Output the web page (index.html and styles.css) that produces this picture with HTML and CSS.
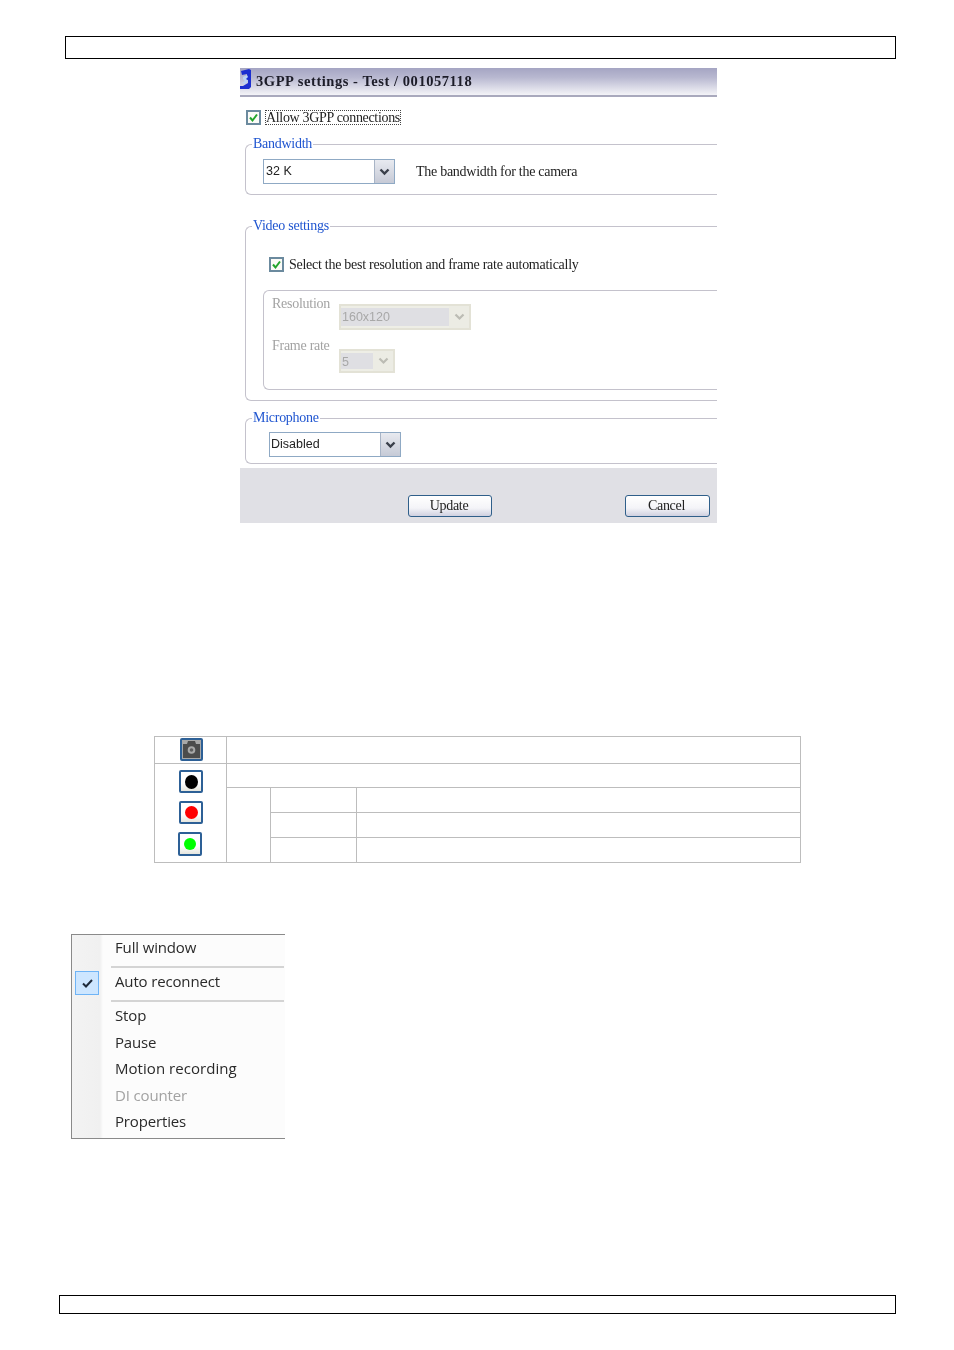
FILE: index.html
```html
<!DOCTYPE html>
<html lang="en">
<head>
<meta charset="utf-8">
<title>3GPP settings</title>
<link rel="stylesheet" href="styles.css">
</head>
<body>
<div class="page">
  <div class="head-box"></div>

  <section class="dialog">
    <div class="titlebar">
      <svg class="app-icon" width="11" height="21" viewBox="0 0 11 21"><path d="M1 2 L9 0 L11 1 V18 L9 20 H0 V17 H3 L8 14 V11 L4 10 L7 8 V5 L2 6 Z" fill="#1c2fd0"/><path d="M3 8 L7 6 L8 8 L6 10 L8 12 L5 15 L2 14 L5 12 L3 10 Z" fill="#bcd4f5"/></svg>
      <span class="title">3GPP settings - Test / 001057118</span>
    </div>

    <div class="allow-row">
      <span class="check"><svg width="11" height="11" viewBox="0 0 11 11"><path d="M2 5.5 L4.5 8.5 L9 2.5" fill="none" stroke="#22a52c" stroke-width="2"/></svg></span>
      <span class="allow-label">Allow 3GPP connections</span>
    </div>

    <fieldset class="group bandwidth">
      <legend>Bandwidth</legend>
      <div class="band-row">
        <div class="combo w132"><span class="combo-text">32 K</span><span class="combo-btn"><svg width="11" height="8" viewBox="0 0 11 8"><path d="M1.5 1.5 L5.5 5.5 L9.5 1.5" fill="none" stroke="#3a3f4a" stroke-width="2.4"/></svg></span></div>
        <span class="serif-text band-note">The bandwidth for the camera</span>
      </div>
    </fieldset>

    <fieldset class="group video">
      <legend>Video settings</legend>
      <div class="auto-row">
        <span class="check"><svg width="11" height="11" viewBox="0 0 11 11"><path d="M2 5.5 L4.5 8.5 L9 2.5" fill="none" stroke="#22a52c" stroke-width="2"/></svg></span>
        <span class="serif-text auto-label">Select the best resolution and frame rate automatically</span>
      </div>
      <div class="inner">
        <div class="inner-row res-row">
          <span class="serif-text muted lbl">Resolution</span>
          <div class="combo off w132h26"><span class="combo-text">160x120</span><span class="combo-btn"><svg width="11" height="8" viewBox="0 0 11 8"><path d="M1.5 1.5 L5.5 5.5 L9.5 1.5" fill="none" stroke="#bcbcb4" stroke-width="2.2"/></svg></span></div>
        </div>
        <div class="inner-row rate-row">
          <span class="serif-text muted lbl">Frame rate</span>
          <div class="combo off w56"><span class="combo-text">5</span><span class="combo-btn"><svg width="11" height="8" viewBox="0 0 11 8"><path d="M1.5 1.5 L5.5 5.5 L9.5 1.5" fill="none" stroke="#bcbcb4" stroke-width="2.2"/></svg></span></div>
        </div>
      </div>
    </fieldset>

    <fieldset class="group mic">
      <legend>Microphone</legend>
      <div class="combo w132 mic-combo"><span class="combo-text">Disabled</span><span class="combo-btn"><svg width="11" height="8" viewBox="0 0 11 8"><path d="M1.5 1.5 L5.5 5.5 L9.5 1.5" fill="none" stroke="#3a3f4a" stroke-width="2.4"/></svg></span></div>
    </fieldset>

    <div class="actions">
      <span class="btn btn-update">Update</span>
      <span class="btn">Cancel</span>
    </div>
  </section>

  <table class="legend-table">
    <colgroup><col class="c1"><col class="c2"><col class="c3"><col class="c4"></colgroup>
    <tr class="r27">
      <td class="icon-cell top-icon">
        <span class="tool cam"><svg width="19" height="19" viewBox="0 0 19 19"><path d="M1 4 H5 L6 1 H13 L14 4 H18 V18 H1 Z" fill="#4c4c4c"/><circle cx="9.5" cy="10" r="3.8" fill="#a8a8a8"/><circle cx="9.5" cy="10" r="1.8" fill="#5e5e5e"/></svg></span>
      </td>
      <td colspan="3"></td>
    </tr>
    <tr class="r24">
      <td rowspan="4" class="icon-cell stack">
        <div class="tools">
          <span class="tool"><span class="dot black"></span></span>
          <span class="tool"><span class="dot red"></span></span>
          <span class="tool shift"><span class="dot green"></span></span>
        </div>
      </td>
      <td colspan="3"></td>
    </tr>
    <tr class="r25"><td rowspan="3"></td><td></td><td></td></tr>
    <tr class="r25"><td></td><td></td></tr>
    <tr class="r25"><td></td><td></td></tr>
  </table>

  <nav class="menu">
    <div class="menu-item first">Full window</div>
    <div class="menu-sep"></div>
    <div class="menu-item auto"><span class="tick"><svg width="11" height="9" viewBox="0 0 11 9"><path d="M1 4.5 L4 7.5 L10 1" fill="none" stroke="#1f2a3a" stroke-width="2"/></svg></span>Auto reconnect</div>
    <div class="menu-sep"></div>
    <div class="menu-item">Stop</div>
    <div class="menu-item">Pause</div>
    <div class="menu-item motion">Motion recording</div>
    <div class="menu-item dim">DI counter</div>
    <div class="menu-item">Properties</div>
  </nav>

  <div class="foot-box"></div>
</div>
</body>
</html>
```
FILE: styles.css
```css
* { box-sizing: border-box; }
html, body { margin: 0; padding: 0; background: #fff; }
.page { width: 954px; height: 1350px; padding-top: 36px; overflow: hidden; }

.head-box { width: 831px; height: 23px; margin-left: 65px; border: 1px solid #000; }
.foot-box { width: 837px; height: 19px; margin: 156px 0 0 59px; border: 1px solid #000; }

.dialog { width: 477px; margin: 9px 0 0 240px; overflow: hidden; filter: blur(.35px); }

.titlebar { height: 29px; display: flex; align-items: center; border-bottom: 2px solid #a9a9bd;
  background: linear-gradient(#a5a5c3 0, #b8b8d0 35%, #f4f4f8 100%); }
.app-icon { flex: none; margin-bottom: 4px; }
.title { margin-left: 5px; font: bold 14.5px "Liberation Serif", serif; color: #1c1c28; letter-spacing: .55px; }

.check { flex: none; width: 15px; height: 15px; border: 2px solid #6b8a9e; background: #fbfbf7; display: flex; align-items: center; justify-content: center; }
.allow-row { display: flex; align-items: center; height: 15px; margin: 13px 0 0 6px; }
.allow-label { margin-left: 4px; padding: 0 1px; outline: 1px dotted #444; outline-offset: -1px; font: 14px/15px "Liberation Serif", serif; color: #222; letter-spacing: -.32px; white-space: nowrap; }

.group { margin: 0 0 0 5px; padding: 0; border: 1px solid #c4c2cc; border-right: 0; border-radius: 6px 0 0 6px; min-width: 0; }
.group legend { margin-left: 6px; padding: 0 1px; font: 14px/16px "Liberation Serif", serif; color: #1f55d0; letter-spacing: -.27px; }
.bandwidth { margin-top: 11px; height: 59px; }
.video { margin-top: 23px; height: 183px; }
.mic { margin-top: 9px; height: 54px; }

.serif-text { font: 14px/16px "Liberation Serif", serif; color: #222; white-space: nowrap; letter-spacing: -.27px; }
.muted { color: #a3a3a3; }

.combo { display: flex; height: 25px; background: #fff; border: 1px solid #8fa9c4; }
.combo-text { flex: 1; padding: 0 2px; font: 12.5px/23px "Liberation Sans", sans-serif; color: #222; }
.combo-btn { flex: none; width: 20px; margin-left: auto; display: flex; align-items: center; justify-content: center; background: linear-gradient(#e8eaf0, #c6cad6); border-left: 1px solid #a8b4c6; }
.w132 { width: 132px; }
.w132h26 { width: 132px; height: 26px; }
.w56 { width: 56px; height: 24px; }
.off { border: 2px solid #e3e2d6; background: #eeeee6; }
.off .combo-text { background: #dfdfe3; color: #a8a8a8; line-height: 18px; margin: 2px 0; padding: 0 1px; }
.off .combo-btn { background: #ececE4; border-left: 0; }

.band-row { display: flex; align-items: center; margin: 7px 0 0 17px; }
.band-note { margin-left: 21px; }

.auto-row { display: flex; align-items: center; height: 15px; margin: 23px 0 0 23px; }
.auto-label { margin-left: 5px; }

.inner { margin: 18px 0 0 17px; height: 100px; border: 1px solid #c4c2cc; border-right: 0; border-radius: 6px 0 0 6px; padding-left: 8px; }
.inner-row { display: flex; align-items: flex-start; }
.lbl { width: 67px; }
.res-row { margin-top: 5px; }
.rate-row { margin-top: 10px; }
.rate-row .lbl { margin-top: -2px; }
.res-row .combo { margin-top: 8px; }
.rate-row .combo { margin-top: 9px; }

.mic-combo { margin: 6px 0 0 23px; }
.mic-combo .combo-text { padding-left: 1px; }

.actions { margin-top: 4px; height: 55px; background: #e0e0e5; padding: 27px 7px 0 168px; display: flex; justify-content: space-between; align-items: flex-start; }
.btn { width: 85px; height: 22px; padding-right: 2px; border: 1px solid #2f5f8a; border-radius: 3px; background: linear-gradient(#fff 0, #f4f4f8 60%, #cfd0e0 100%); font: 14px/20px "Liberation Serif", serif; color: #222; text-align: center; letter-spacing: -.3px; }
.btn-update { width: 84px; }

.legend-table { margin: 213px 0 0 154px; width: 646px; border-collapse: collapse; table-layout: fixed; }
.legend-table td { border: 1px solid #bdbdbd; padding: 0; }
.c1 { width: 72px; } .c2 { width: 44px; } .c3 { width: 86px; } .c4 { width: 444px; }
.r27 { height: 27px; } .r24 { height: 24px; } .r25 { height: 25px; }

.icon-cell { vertical-align: top; }
.top-icon { padding-left: 25px !important; }
.top-icon .tool { margin-top: 1px; }
.tools { display: flex; flex-direction: column; gap: 8px; padding: 6px 0 0 24px; }
.tool { display: flex; width: 24px; height: 23px; align-items: center; justify-content: center; border: 2px solid #2d6096; border-radius: 2px; background: linear-gradient(#fff 60%, #e6e6de); filter: blur(.35px); }
.tool.cam { width: 23px; background: #a8a8a8; }
.tool.shift { margin-left: -1px; height: 24px; }
.dot { width: 13px; height: 13px; border-radius: 50%; }
.black { background: #000; height: 14px; } .red { background: #ff0000; } .green { background: #00ff00; width: 12px; height: 12px; }

.menu { width: 214px; height: 205px; margin: 71px 0 0 71px; border: 1px solid #8a8a8a; border-right: 0; background: linear-gradient(90deg, #f3f3f3 0, #f0f0f0 28px, #fcfcfc 31px, #fcfcfc 100%); font: 15px/27px "Open Sans", sans-serif; color: #2a2a2a; filter: blur(.25px); }
.menu-item { height: 26.6px; padding-left: 43px; letter-spacing: -.15px; white-space: nowrap; }
.menu-item.first { height: 25px; margin-bottom: 6px; line-height: 25px; }
.menu-item.dim { color: #a2a2a2; }
.menu-item.motion { letter-spacing: .05px; }
.menu-item.auto { position: relative; height: 26px; margin-bottom: 6px; line-height: 26px; }
.menu-sep { height: 2px; margin: 0 1px 0 39px; background: #d4d4d4; }
.tick { position: absolute; left: 3px; top: 3px; width: 24px; height: 24px; display: flex; align-items: center; justify-content: center; background: #cde6ff; border: 1px solid #6fb4f6; }
```
